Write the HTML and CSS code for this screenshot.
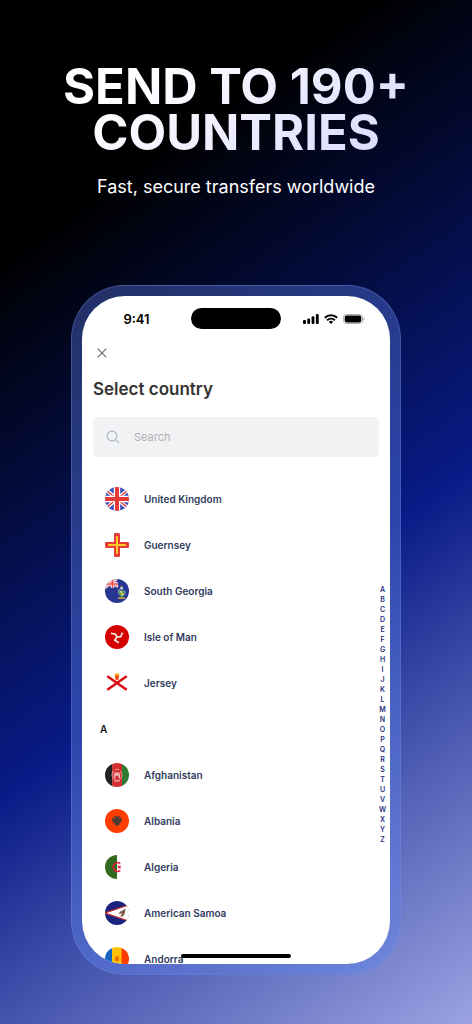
FILE: index.html
```html
<!DOCTYPE html>
<html lang="en">
<head>
    <meta charset="UTF-8">
    <meta name="viewport" content="width=device-width, initial-scale=1.0">
    <title>Send to 190+ countries</title>
    <link rel="stylesheet" href="styles.css">
</head>
<body>
    <div class="poster">
        <header class="headline">
            <h1>SEND TO 190+<br>COUNTRIES</h1>
            <p>Fast, secure transfers worldwide</p>
        </header>
        <div class="phone">
            <div class="screen">
                <div class="status-bar">
                    <span class="time">9:41</span>
                    <span class="island"></span>
                    <span class="status-icons">
                        <svg width="16" height="10" viewBox="0 0 16 10">
                            <rect x="0" y="6" width="3" height="4" rx="1"/>
                            <rect x="4.3" y="4.4" width="2.8" height="5.6" rx="1"/>
                            <rect x="8.6" y="2.3" width="2.8" height="7.7" rx="1"/>
                            <rect x="12.9" y="0" width="2.8" height="10" rx="1"/>
                        </svg>
                        <svg width="14" height="10" viewBox="0 0 14 10">
                            <g fill="none" stroke="#000" stroke-width="1.9">
                                <path d="M.8 3.8a9 9 0 0 1 12.4 0"/>
                                <path d="M3.1 6.2a5.6 5.6 0 0 1 7.8 0"/>
                            </g>
                            <path d="M7 10 4.9 7.9a3 3 0 0 1 4.2 0z"/>
                        </svg>
                        <svg width="22" height="10" viewBox="0 0 22 10">
                            <rect x=".5" y=".5" width="19" height="9" rx="3" fill="#fff" stroke="#aaa"/>
                            <rect x="1.7" y="1.6" width="16.6" height="6.8" rx="1.8"/>
                            <path d="M20.4 3.3v3.4q1.2-.5 1.2-1.7t-1.2-1.7" fill="#aaa"/>
                        </svg>
                    </span>
                </div>
                <button class="close" type="button" aria-label="Close">
                    <svg width="10" height="10" viewBox="0 0 10 10"><path d="M.7.7l8.600 8.600M9.300.7L.7 9.300" fill="none" stroke="#666" stroke-width="1.1"/></svg>
                </button>
                <h2>Select country</h2>
                <div class="search">
                    <svg width="14" height="14" viewBox="0 0 14 14" fill="none" stroke="#adb3c0" stroke-width="1.1"><circle cx="6" cy="6" r="4.9"/><path d="M9.6 9.6l3.4 3.4"/></svg>
                    <input type="text" placeholder="Search" aria-label="Search">
                </div>
                <ul class="countries">
                    <li>
                        <svg class="flag" viewBox="0 0 24 24">
                            <path fill="#3f51b5" d="M0 0h24v24H0z"/>
                            <path stroke="#fff" stroke-width="3.6" d="M0 2l24 20M24 2L0 22"/>
                            <path stroke="#e53935" stroke-width="1.5" d="M1 3l9 7.500M23 3l-9 7.500M1 21l9-7.500M23 21l-9-7.500"/>
                            <path stroke="#fff" stroke-width="6.4" d="M12 0v24M0 12h24"/>
                            <path stroke="#e53935" stroke-width="4" d="M12 0v24M0 12h24"/>
                        </svg>
                        <span>United Kingdom</span>
                    </li>
                    <li>
                        <svg class="flag" viewBox="0 0 24 24">
                            <path fill="#fff" d="M0 0h24v24H0z"/>
                            <path stroke="#e53935" stroke-width="6" d="M12 0v24M0 12h24"/>
                            <path stroke="#ffca28" stroke-width="2" d="M12 3.5v17M3.5 12h17"/>
                            <path fill="#ffca28" d="M3.5 10.3l1.500 1.700-1.500 1.700zM20.500 10.300l-1.500 1.700 1.500 1.700zM10.300 3.500l1.700 1.500 1.700-1.500zM10.300 20.500l1.700-1.500 1.700 1.500z"/>
                        </svg>
                        <span>Guernsey</span>
                    </li>
                    <li>
                        <svg class="flag" viewBox="0 0 24 24">
                            <path fill="#283593" d="M0 0h24v24H0z"/>
                            <path stroke="#fff" stroke-width="2.2" d="M0 -1l13 9M0 9L12 0"/>
                            <path stroke="#fff" stroke-width="3.4" d="M7.5 0v9M0 5h13"/>
                            <path stroke="#ef5350" stroke-width=".8" d="M1 0l12 8M1 8.5L12 0"/>
                            <path stroke="#ef5350" stroke-width="1.6" d="M7.5 0v9M0 5h13"/>
                            <path fill="#78909c" d="M12.5 11l2.5-1.5.5 5-2.2 1zM18.5 11l2 1.5v4l-2-1z"/>
                            <path fill="#4c9a62" d="M14.3 11.5h4.8v4.2q-.3 2-2.4 3-2.1-1-2.4-3z"/>
                            <path fill="#cfd8dc" d="M15.3 8h2.6v2.5h-2.6zM15 12h1.5v1.5H15zM17 15h1.5v1.5H17z"/>
                            <path fill="#fbc02d" d="M16 12.5h1.5V16H16zM13 18.5h7v1.3h-7z"/>
                            <path fill="#8d6e63" d="M15.7 6.5h1.8v1.7h-1.8z"/>
                        </svg>
                        <span>South Georgia</span>
                    </li>
                    <li>
                        <svg class="flag" viewBox="0 0 24 24">
                            <path fill="#d50000" d="M0 0h24v24H0z"/>
                            <path fill="none" stroke="#f3ece4" stroke-width="1.7" stroke-linejoin="round" d="M12 12L10.500 9.200 6.700 8.500M12 12l3.800-.3 1.300-3.500M12 12l-2.200 3.300 3.700 2.200"/>
                            <path fill="none" stroke="#f3ece4" stroke-width="1" d="M6.500 7.500l-.2 1.800M16.300 7.900l2.200.5M13 18.300l1.200-1.300"/>
                        </svg>
                        <span>Isle of Man</span>
                    </li>
                    <li>
                        <svg class="flag" viewBox="0 0 24 24">
                            <path fill="#fff" d="M0 0h24v24H0z"/>
                            <path stroke="#d90b12" stroke-width="2.5" d="M2 5l20 14M22 5L2 19"/>
                            <path fill="#f4511e" d="M9.900 3.500h4.200v3.600q-.2 1.700-2.100 2.500-1.900-.8-2.100-2.500z"/>
                            <path fill="#fbb414" d="M9.700 2.300l1.200.5 1.100-.8 1.100.8 1.200-.5-.3 2.200H10z"/>
                        </svg>
                        <span>Jersey</span>
                    </li>
                    <li class="letter">A</li>
                    <li>
                        <svg class="flag" viewBox="0 0 24 24">
                            <path fill="#212121" d="M0 0h7.500v24H0z"/>
                            <path fill="#d32f2f" d="M7.3 0h9.800v24H7.300z"/>
                            <path fill="#2e7d32" d="M17 0h7v24h-7z"/>
                            <g fill="none" stroke="#eda5a5" stroke-width=".9">
                                <path d="M8.300 8q-2.800 4.500.7 8.700 3 2 6 0 3.500-4.200.7-8.700"/>
                                <path d="M9 18.200h6M9 10.800l1-1.300M15 10.800l-1-1.300M9.800 6.800q2.200-1.200 4.400 0"/>
                            </g>
                            <path fill="#f0b4b4" d="M9 15.300v-2.800q.2-2.800 3-3.300 2.800.5 3 3.300v2.800h-1.500v-2.500h-3v2.500z"/>
                        </svg>
                        <span>Afghanistan</span>
                    </li>
                    <li>
                        <svg class="flag" viewBox="0 0 24 24">
                            <path fill="#ff3d00" d="M0 0h24v24H0z"/>
                            <path fill="#4b3c35" d="M12 8.300l-1.300-1.500-1.900.5 1.200 1v1.200L8.700 9.300 7.300 8l.2 4.800 1 .3-.8 1.200 2.100-.3-.9 2 1.900-.5L12 18l1.200-2.500 1.900.5-.9-2 2.100.3-.8-1.200 1-.3.2-4.800-1.400 1.300-1.300.2V8.300l1.200-1-1.900-.5z"/>
                        </svg>
                        <span>Albania</span>
                    </li>
                    <li>
                        <svg class="flag" viewBox="0 0 24 24">
                            <path fill="#fff" d="M0 0h24v24H0z"/>
                            <path fill="#33691e" d="M0 0h12v24H0z"/>
                            <path fill="none" stroke="#f4143c" stroke-width="1.4" d="M15.300 8.600a4.300 4.300 0 1 0 0 6.800"/>
                            <path fill="#f4143c" d="M11.600 12l1.900-.6V9.700l1.100 1.400 1.700-.5-1 1.400 1 1.400-1.700-.5-1.100 1.400v-1.700z"/>
                        </svg>
                        <span>Algeria</span>
                    </li>
                    <li>
                        <svg class="flag" viewBox="0 0 24 24">
                            <path fill="#1a237e" d="M0 0h24v24H0z"/>
                            <path fill="#fff" stroke="#c62828" stroke-width="1.2" d="M0 12L22 4.500h4v15h-4z"/>
                            <path fill="#fff" d="M21.800 5.200H24v13.600h-2.200z"/>
                            <path fill="#795548" d="M20.500 7.500l-3.300 2.200-2 .8-1.700 2.300 1.700.2 1-.9.800 1.100-1.900 2.100 2 .2 2-1.400.8-2.400z"/>
                            <path fill="#d7b56d" d="M14.500 15.500l4-.6-.6 1.100-3.200.5zM13.500 12l1.300.3-.6.8z"/>
                        </svg>
                        <span>American Samoa</span>
                    </li>
                    <li>
                        <svg class="flag" viewBox="0 0 24 24">
                            <path fill="#1565c0" d="M0 0h7.300v24H0z"/>
                            <path fill="#ffc107" d="M7 0h10v24H7z"/>
                            <path fill="#ff3d00" d="M16.500 0H24v24h-7.500z"/>
                            <path fill="#f57c00" d="M10 9.300h4v4q-.5 1-2 1.400-1.500-.4-2-1.400z"/>
                            <path fill="#ef5f00" d="M11 10.500h2v3h-2z"/>
                        </svg>
                        <span>Andorra</span>
                    </li>
                </ul>
                <nav class="index" aria-label="Countries by letter">
                    <a href="#a">A</a>
                    <a href="#b">B</a>
                    <a href="#c">C</a>
                    <a href="#d">D</a>
                    <a href="#e">E</a>
                    <a href="#f">F</a>
                    <a href="#g">G</a>
                    <a href="#h">H</a>
                    <a href="#i">I</a>
                    <a href="#j">J</a>
                    <a href="#k">K</a>
                    <a href="#l">L</a>
                    <a href="#m">M</a>
                    <a href="#n">N</a>
                    <a href="#o">O</a>
                    <a href="#p">P</a>
                    <a href="#q">Q</a>
                    <a href="#r">R</a>
                    <a href="#s">S</a>
                    <a href="#t">T</a>
                    <a href="#u">U</a>
                    <a href="#v">V</a>
                    <a href="#w">W</a>
                    <a href="#x">X</a>
                    <a href="#y">Y</a>
                    <a href="#z">Z</a>
                </nav>
                <div class="home-bar"></div>
            </div>
        </div>
    </div>
</body>
</html>
```
FILE: styles.css
```css
* {
    box-sizing: border-box;
}
body {
    font-family: Inter, "Liberation Sans", sans-serif;
    margin: 0;
}
.poster {
    height: 100vh;
    display: flex;
    flex-direction: column;
    padding: 64px 71px 49px;
    background: linear-gradient(145deg, #000 19%, #040d42 39%, #081b87 59%, #4655ae 76%, #9ba3e2 100%);
}
.headline {
    height: 221px;
    flex-shrink: 0;
    display: flex;
    flex-direction: column;
    align-items: center;
    text-align: center;
    white-space: nowrap;
}
.headline h1 {
    margin: 0;
    font-size: 49px;
    line-height: 46px;
    font-weight: 700;
    background: linear-gradient(143deg, #fff 20%, #dcdcff 90%);
    -webkit-background-clip: text;
    background-clip: text;
    color: transparent;
}
.headline p {
    margin: 19px 0 0;
    color: #fff;
    font-size: 18px;
    line-height: 24px;
}
.phone {
    flex: 1;
    min-height: 0;
    display: flex;
    padding: 10px;
    border: 1px solid rgba(125, 150, 235, 0.3);
    border-radius: 54px;
    background: linear-gradient(155deg, rgba(80, 110, 210, 0.42), rgba(95, 130, 230, 0.5));
}
.screen {
    position: relative;
    flex: 1;
    overflow: hidden;
    display: flex;
    flex-direction: column;
    border-radius: 43px;
    background: #fff;
}
.status-bar {
    height: 45px;
    flex-shrink: 0;
    display: grid;
    grid-template-columns: 1fr 90px 1fr;
    align-items: center;
}
.time {
    text-align: center;
    font-size: 13px;
    font-weight: 600;
}
.island {
    height: 21px;
    border-radius: 11px;
    background: #000;
}
.status-icons {
    display: flex;
    align-items: center;
    justify-content: flex-end;
    gap: 5px;
    padding-right: 25px;
}
.close {
    width: 18px;
    height: 24px;
    flex-shrink: 0;
    display: flex;
    align-items: center;
    justify-content: center;
    margin-left: 11px;
    padding: 0;
    border: 0;
    background: none;
}
.screen h2 {
    margin: 12px 11px 16px;
    color: #333;
    font-size: 17px;
    line-height: 24px;
    font-weight: 600;
}
.search {
    height: 40px;
    flex-shrink: 0;
    display: flex;
    align-items: center;
    gap: 14px;
    margin: 0 11px 19px;
    padding: 0 13px;
    border-radius: 5px;
    background: #f1f2f4;
}
.search input {
    flex: 1;
    min-width: 0;
    padding: 0;
    border: 0;
    outline: 0;
    background: none;
    font: 11px Inter, "Liberation Sans", sans-serif;
}
.search input::placeholder {
    color: #b0b0b3;
}
.countries {
    list-style: none;
    margin: 0;
    padding: 0 23px;
}
.countries li {
    height: 46px;
    display: flex;
    align-items: center;
    gap: 15px;
    color: #2f3b5e;
    font-size: 10px;
    font-weight: 600;
}
.countries .letter {
    margin-left: -5px;
    color: #111;
}
.flag {
    width: 24px;
    height: 24px;
    border-radius: 50%;
}
.index {
    position: absolute;
    top: 289px;
    right: 3px;
    display: flex;
    flex-direction: column;
}
.index a {
    width: 9px;
    color: #2b2f7d;
    font-size: 7px;
    line-height: 10px;
    font-weight: 600;
    text-align: center;
    text-decoration: none;
}
.home-bar {
    position: absolute;
    bottom: 6px;
    left: 50%;
    width: 110px;
    height: 4px;
    border-radius: 2px;
    background: #000;
    transform: translateX(-50%);
}
```
